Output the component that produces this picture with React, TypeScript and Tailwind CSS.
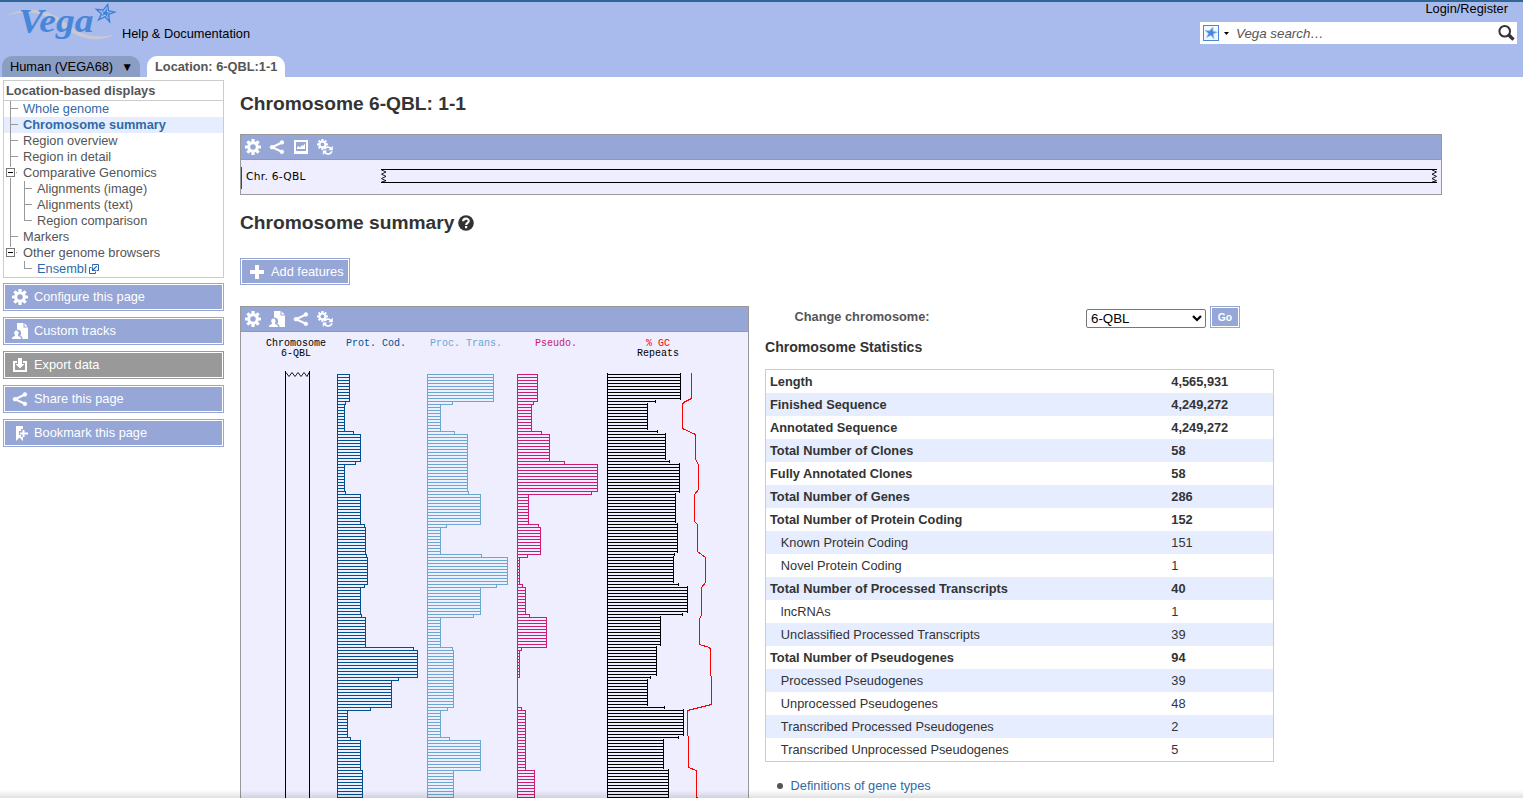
import React from 'react';

type Icon = () => React.ReactElement;

const GearShape = () => (
  <>
    <circle cx="8" cy="8" r="4.3" fill="none" stroke="currentColor" strokeWidth="3" />
    {[0, 45, 90, 135, 180, 225, 270, 315].map((a) => (
      <rect key={a} x="6.4" y="0" width="3.2" height="3.4" rx="0.5" fill="currentColor" transform={`rotate(${a} 8 8)`} />
    ))}
  </>
);

const Gear: Icon = () => (
  <svg className="size-4 shrink-0" viewBox="0 0 16 16"><GearShape /></svg>
);

const Share: Icon = () => (
  <svg className="size-4 shrink-0" viewBox="0 0 16 16" fill="currentColor" stroke="currentColor">
    <path d="M13 3.500 3 8.200 13 12.800" fill="none" strokeWidth="2.100" />
    <circle cx="12.900" cy="3.400" r="1.900" strokeWidth="0.600" />
    <circle cx="3" cy="8.200" r="1.900" strokeWidth="0.600" />
    <circle cx="12.900" cy="12.800" r="1.900" strokeWidth="0.600" />
  </svg>
);

const Picture: Icon = () => (
  <svg className="size-4 shrink-0" viewBox="0 0 16 16" fill="currentColor">
    <path fillRule="evenodd" d="M1 1h14v14H1zM3 3v9h10V3z" />
    <path d="M4 10V8.500L5.500 7 7 8.500 9 6l1 1 2-2.500V10z" />
  </svg>
);

const Reset: Icon = () => (
  <svg className="size-4 shrink-0" viewBox="0 0 16 16">
    <g transform="scale(0.68)"><GearShape /></g>
    <g fill="none" stroke="currentColor" strokeWidth="1.700">
      <path d="M7.400 10.200c1.400-2.600 5-2.700 6.600-.4" />
      <path d="M15 12.200c-1.200 3.300-5 3.600-7 1.200" />
    </g>
    <path d="M15.800 6.800v4.400h-4.400zM5.800 16v-4.400h4.400z" fill="currentColor" />
  </svg>
);

const Tracks: Icon = () => (
  <svg className="size-4 shrink-0" viewBox="0 0 16 16" fill="currentColor">
    <path d="M5 0h6.500v4.500H16V16h-5.500c0-2-.8-2.700-2.300-3.200.9-1 1-2.300.8-3.500C8.700 7.300 7 6.500 5 6.500z" />
    <path d="M12.500.3 15.700 3.500h-3.200z" />
    <path d="M0 16c0-2 .8-2.500 3-3v-1c-1.200-1-1.200-4.400 1.400-4.400S7 11 6 12v1c2.200.5 3 1 3 3z" />
  </svg>
);

const Export: Icon = () => (
  <svg className="size-4 shrink-0" viewBox="0 0 16 16" fill="currentColor">
    <path d="M1 4h4v2H3v7h10V6h-2V4h4v11H1z" />
    <path d="M6 1h4v6h2.500L8 11.500 3.500 7H6z" />
  </svg>
);

const Bookmark: Icon = () => (
  <svg className="size-4 shrink-0" viewBox="0 0 16 16" fill="currentColor">
    <path d="M4 1h7v3H9v2H7v4h2v2h2v4l-3.500-3.500L4 16z" />
    <path d="M10.500 5h2v2.500H16v2h-3.500V12h-2V9.500H8v-2h2.500z" />
  </svg>
);

const STAR = 'M12.500 0 13.200 6.800 20 8.500 13.500 11 14.500 19 9.500 13.500 2.500 17 5.500 10.500 0 5.500 7.500 6.200z';

const Logo = () => (
  <svg className="h-[44px] w-[122px] shrink-0 overflow-visible" viewBox="0 0 122 44">
    <path d="M8 15.500C20 7 44 7 59 18S86 41 115 34.500C94 45 76 37 60 25S30 9 8 15.500z" fill="#c5c9d3" />
    <text x="18.500" y="31.500" fontFamily="Liberation Serif, serif" fontWeight="700" fontStyle="italic" fontSize="34.500" fill="#4886d9" textLength="75" lengthAdjust="spacingAndGlyphs">Vega</text>
    <g transform="translate(96.500 4.500) scale(0.9)">
      <path d={STAR} fill="#a9c6f4" stroke="#3f80d6" strokeWidth="1.600" />
      <path d="M11.500 4v5L16 9l-4 1.500.5 4-3-3.500-4 2 2.500-3.500-3-2 4 .5z" fill="#3f80d6" />
    </g>
  </svg>
);

type Tree = 'mid' | 'box' | 'sub' | 'subEnd' | 'last' | 'lastEnd';

const TreeLine = ({ kind }: { kind: Tree }) => {
  const sub = kind === 'sub' || kind === 'subEnd' || kind === 'lastEnd';
  const d: Record<Tree, string> = {
    mid: 'M6 0h1v16H6zM7 7h7v1H7z',
    box: 'M6 0h1v2H6zM6 13h1v3H6zM12 7h1v1h-1z',
    last: 'M6 0h1v2H6zM12 7h1v1h-1z',
    sub: 'M6 0h1v16H6zM20 0h1v16h-1zM21 7h7v1h-7z',
    subEnd: 'M6 0h1v16H6zM20 0h1v8h-1zM21 7h7v1h-7z',
    lastEnd: 'M20 0h1v8h-1zM21 7h7v1h-7z',
  };
  return (
    <svg className={sub ? 'h-4 w-[33px] shrink-0' : 'h-4 w-[19px] shrink-0'} viewBox={sub ? '0 0 33 16' : '0 0 19 16'} shapeRendering="crispEdges">
      <path d={d[kind]} fill="#999" />
      {(kind === 'box' || kind === 'last') && (
        <>
          <path d="M2 3h9v9H2zM3 4v7h7V4z" fill="#777" fillRule="evenodd" />
          <path d="M4 7h5v1H4z" fill="#000" />
        </>
      )}
    </svg>
  );
};

const ExternalIcon = () => (
  <svg className="ml-0.5 size-[11px] shrink-0" viewBox="0 0 11 11" fill="none" stroke="#2a66ac">
    <path d="M3.500 2.500V.5h6v6H7.500M2.500 3.500H.5v6h6v-2" />
    <path d="M7.800 2.200 3.800 6.200M3.500 3.200v3.300h3.300" strokeWidth="1.200" />
  </svg>
);

const NAV: { label: string; tree: Tree; link?: boolean; active?: boolean }[] = [
  { label: 'Whole genome', tree: 'mid', link: true },
  { label: 'Chromosome summary', tree: 'mid', link: true, active: true },
  { label: 'Region overview', tree: 'mid' },
  { label: 'Region in detail', tree: 'mid' },
  { label: 'Comparative Genomics', tree: 'box' },
  { label: 'Alignments (image)', tree: 'sub' },
  { label: 'Alignments (text)', tree: 'sub' },
  { label: 'Region comparison', tree: 'subEnd' },
  { label: 'Markers', tree: 'mid' },
  { label: 'Other genome browsers', tree: 'last' },
  { label: 'Ensembl', tree: 'lastEnd', link: true },
];

const TOOLS: { label: string; icon: Icon; disabled?: boolean }[] = [
  { label: 'Configure this page', icon: Gear },
  { label: 'Custom tracks', icon: Tracks },
  { label: 'Export data', icon: Export, disabled: true },
  { label: 'Share this page', icon: Share },
  { label: 'Bookmark this page', icon: Bookmark },
];

const STATS: [string, string, boolean][] = [
  ['Length', '4,565,931', true],
  ['Finished Sequence', '4,249,272', true],
  ['Annotated Sequence', '4,249,272', true],
  ['Total Number of Clones', '58', true],
  ['Fully Annotated Clones', '58', true],
  ['Total Number of Genes', '286', true],
  ['Total Number of Protein Coding', '152', true],
  ['Known Protein Coding', '151', false],
  ['Novel Protein Coding', '1', false],
  ['Total Number of Processed Transcripts', '40', true],
  ['lncRNAs', '1', false],
  ['Unclassified Processed Transcripts', '39', false],
  ['Total Number of Pseudogenes', '94', true],
  ['Processed Pseudogenes', '39', false],
  ['Unprocessed Pseudogenes', '48', false],
  ['Transcribed Processed Pseudogenes', '2', false],
  ['Transcribed Unprocessed Pseudogenes', '5', false],
];

/* Runs of [bar width, number of 3px bins] */
type Runs = [number, number][];
const PROT: Runs = [[12, 9], [8, 1], [7, 9], [16, 1], [23, 9], [18, 1], [7, 9], [8, 1], [23, 10], [27, 1], [28, 9], [29, 1], [30, 9], [27, 1], [23, 9], [24, 1], [28, 10], [76, 1], [80, 9], [61, 1], [54, 9], [33, 1], [10, 9], [13, 1], [23, 10], [25, 10]];
const PROC: Runs = [[66, 9], [25, 1], [13, 9], [27, 1], [40, 19], [41, 1], [53, 10], [19, 1], [13, 9], [54, 1], [80, 9], [69, 1], [53, 9], [46, 1], [13, 10], [25, 1], [26, 19], [20, 1], [13, 9], [22, 1], [53, 10], [26, 10]];
const PSEUDO: Runs = [[20, 9], [16, 1], [14, 9], [24, 1], [32, 9], [47, 1], [80, 9], [74, 1], [11, 10], [21, 1], [23, 9], [10, 1], [2, 9], [5, 1], [8, 9], [12, 1], [29, 10], [4, 1], [2, 9], [0, 10], [4, 1], [8, 20], [17, 10]];
const REPEATS: Runs = [[73, 9], [48, 1], [40, 9], [50, 1], [58, 9], [62, 1], [72, 10], [68, 10], [70, 10], [67, 1], [66, 9], [71, 1], [80, 9], [75, 1], [53, 10], [49, 10], [43, 1], [40, 9], [57, 1], [76, 9], [71, 1], [56, 10], [61, 10]];
const GC = '691,372 691,398 683,402 682,404 682,428 695,434 695,459 698,464 698,489 694,494 694,521 697,524 697,551 705,557 705,582 701,587 701,615 699,618 699,644 709,647 710,649 710,675 711,676 711,704 687,710 687,735 688,736 688,767 696,770 696,797 698,798';

const TOP = 374;

function outlinePath(x0: number, runs: Runs): string {
  let d = '';
  let y = TOP;
  for (const [w, n] of runs) {
    for (let i = 0; i < n; i++) {
      d += `M${x0} ${y}h${w + 1}v1H${x0}zM${x0} ${y + 3}h${w + 1}v1H${x0}zM${x0 + w} ${y}h1v4h-1zM${x0} ${y}h1v4h-1z`;
      y += 3;
    }
  }
  return d;
}

function tickPath(x0: number, runs: Runs): string {
  let d = '';
  let y = TOP;
  for (const [w, n] of runs) {
    for (let i = 0; i < n; i++) {
      d += `M${x0} ${y}h${w}v1H${x0}zM${x0 + w} ${y - 1}h1v3h-1zM${x0} ${y - 1}h1v3h-1z`;
      y += 3;
    }
  }
  return d;
}

const ChromosomeChart = () => (
  <svg className="block h-[466px] w-[507px]" viewBox="241 332 507 466" shapeRendering="crispEdges">
    <g fontFamily="Liberation Mono, monospace" fontSize="10">
      <text x="266" y="346">Chromosome</text>
      <text x="281" y="356">6-QBL</text>
      <text x="346" y="346" fill="#005090">Prot. Cod.</text>
      <text x="430" y="346" fill="#6aa8cf">Proc. Trans.</text>
      <text x="535" y="346" fill="#cc1a75">Pseudo.</text>
      <text x="646" y="346" fill="#f00">% GC</text>
      <text x="637" y="356">Repeats</text>
    </g>
    <path d="M285 371h1v427h-1zM309 371h1v427h-1z" />
    <path d="M286 372.500l3 4 3-4 3 4 3-4 3 4 3-4 3 4 2-4" fill="none" stroke="#000" strokeWidth="0.900" shapeRendering="auto" />
    <path d={outlinePath(337, PROT)} fill="#005090" />
    <path d={outlinePath(427, PROC)} fill="#6aa8cf" />
    <path d={outlinePath(517, PSEUDO)} fill="#cc1a75" />
    <path d={tickPath(607, REPEATS)} />
    <polyline points={GC} fill="none" stroke="#f00" transform="translate(.5 .5)" />
  </svg>
);

const Toolbar = ({ icons }: { icons: Icon[] }) => (
  <div className="flex h-[25px] items-center gap-2 border-b border-[#999] bg-[#95a6d7] pl-1 text-white">
    {icons.map((I, i) => <I key={i} />)}
  </div>
);

export default function App() {
  return (
    <div className="relative h-[798px] w-[1523px] overflow-hidden bg-white font-['Liberation_Sans',Arial,sans-serif] text-[12.8px] leading-4 text-[#333]">
      <header className="flex h-[77px] flex-col justify-between border-t-2 border-[#2f6696] bg-[#a9baec] text-black">
        <div className="flex h-[46px] justify-between">
          <div className="-mt-0.5 flex">
            <Logo />
            <a className="mt-[26px]">Help &amp; Documentation</a>
          </div>
          <div className="mr-1.5 flex flex-col items-end">
            <a className="-mt-px mr-[9px]">Login/Register</a>
            <div className="mt-[5px] flex h-[22px] w-[317px] items-center bg-white pl-[3px] pr-[2px]">
              <svg className="size-4" viewBox="0 0 16 16">
                <rect x=".5" y=".5" width="15" height="15" fill="#f3f8ff" stroke="#4886d9" />
                <path d={STAR} transform="translate(2 2) scale(.62)" fill="#4886d9" stroke="#9fc3f2" strokeWidth="1.500" />
              </svg>
              <svg className="ml-[5px] h-[3px] w-[5px]" viewBox="0 0 5 3"><path d="M0 0h5L2.500 3z" /></svg>
              <span className="ml-[7px] flex-1 pt-px text-[13.330px] italic text-[#555]">Vega search…</span>
              <svg className="h-[18px] w-[17px]" viewBox="0 0 17 18" fill="none" stroke="#333">
                <circle cx="6.700" cy="7.200" r="5.300" strokeWidth="2" />
                <path d="M10.800 11l4.700 4.600" strokeWidth="3.400" />
              </svg>
            </div>
          </div>
        </div>
        <nav className="flex h-[21px] gap-[7px] pl-0.5">
          <div className="flex w-[138px] items-center rounded-t-[10px] bg-[#8b9dc3] pl-2">
            Human (VEGA68)<span className="ml-2 text-[12px]">▼</span>
          </div>
          <div className="flex w-[138px] items-center rounded-t-[10px] bg-white pl-2 font-bold text-[#555]">Location: 6-QBL:1-1</div>
        </nav>
      </header>

      <div className="flex">
        <aside className="ml-[3px] mt-[3px] w-[221px]">
          <div className="h-[198px] border border-[#ccc]">
            <h2 className="h-5 border-b border-[#ccc] pl-0.5 pt-0.5 font-bold text-[#555]">Location-based displays</h2>
            <ul>
              {NAV.map((n) => (
                <li key={n.label} className={`flex h-4 items-center ${n.active ? 'bg-[#e6edff] font-bold' : ''} ${n.link ? 'text-[#2f6aa8]' : 'text-[#555]'}`}>
                  <TreeLine kind={n.tree} />
                  {n.label}
                  {n.label === 'Ensembl' && <ExternalIcon />}
                </li>
              ))}
            </ul>
          </div>
          <div className="mt-[5px] flex flex-col gap-1.5">
            {TOOLS.map(({ label, icon: I, disabled }) => (
              <a key={label} className={`block h-7 border bg-white p-px text-white ${disabled ? 'border-[#999]' : 'border-[#95a6d7]'}`}>
                <span className={`flex h-6 items-center gap-1.5 pl-[7px] ${disabled ? 'bg-[#999]' : 'bg-[#95a6d7]'}`}>
                  <I />
                  {label}
                </span>
              </a>
            ))}
          </div>
        </aside>

        <main className="ml-4 flex-1">
          <h1 className="mt-4 text-[19.200px] font-bold leading-[22px]">Chromosome 6-QBL: 1-1</h1>
          <section className="mt-[19px] h-[61px] w-[1202px] border border-[#999] bg-[#eeeeff]">
            <Toolbar icons={[Gear, Share, Picture, Reset]} />
            <svg className="block h-[34px] w-[1200px]" viewBox="241 160 1200 34" shapeRendering="crispEdges">
              <path d="M241 167h1v22h-1z" fill="#e00" />
              <text x="246" y="180" fontFamily="DejaVu Sans, sans-serif" fontSize="10.670" textLength="59.500">Chr. 6-QBL</text>
              <path d="M381 169h1056v1H381zM381 182h1056v1H381z" />
              <path d="M381.500 185v3" stroke="#fff" />
              <path d="M381.500 170l4.500 2-4.500 2.200 4.500 2.200-4.500 2.200 4.500 2.200-4.500 1.200M1432 170l4.500 2-4.500 2.200 4.500 2.200-4.500 2.200 4.500 2.200-4.500 1.200" fill="none" stroke="#000" strokeWidth="0.900" shapeRendering="auto" />
            </svg>
          </section>
          <h2 className="mt-[17px] flex items-center text-[19.200px] font-bold leading-[22px]">
            Chromosome summary
            <svg className="ml-1 size-4" viewBox="0 0 16 16">
              <circle cx="8" cy="8" r="7.800" fill="#333" />
              <path d="M5.200 6.200C5.200 2.800 10.900 2.900 10.800 6c0 1.800-2.700 1.900-2.700 3.900" fill="none" stroke="#fff" strokeWidth="2.100" />
              <rect x="7" y="11" width="2.200" height="2.200" fill="#fff" />
            </svg>
          </h2>
          <a className="mt-6 block h-[27px] w-[110px] border border-[#95a6d7] p-px text-white">
            <span className="flex h-[23px] items-center bg-[#95a6d7] pl-2">
              <svg className="size-[14px]" viewBox="0 0 14 14"><path d="M5 0h4v5h5v4H9v5H5V9H0V5h5z" fill="#fff" /></svg>
              <span className="ml-[7px]">Add features</span>
            </span>
          </a>

          <div className="mt-[21px] flex">
            <section className="h-[500px] w-[509px] shrink-0 border border-[#999] bg-[#eeeeff]">
              <Toolbar icons={[Gear, Tracks, Share, Reset]} />
              <ChromosomeChart />
            </section>
            <section className="ml-4 w-[509px]">
              <div className="flex h-[22px] items-center">
                <label className="w-[321px] pl-[29.500px] font-bold text-[#555]">Change chromosome:</label>
                <div className="mt-[3px] flex h-[19px] w-[120px] items-center justify-between rounded-[2px] border border-[#767676] bg-white pl-1 pr-[3px] text-[13.330px] text-black">
                  6-QBL
                  <svg className="h-[7px] w-[10px]" viewBox="0 0 10 7" fill="none" stroke="#000" strokeWidth="2.200"><path d="M1 1l4 4 4-4" /></svg>
                </div>
                <button className="ml-1 h-[22px] w-[30px] border border-[#95a6d7] p-px text-[10.300px] font-bold text-white">
                  <span className="block h-[18px] bg-[#95a6d7] pt-px leading-[18px]">Go</span>
                </button>
              </div>
              <h3 className="mt-[10px] text-[14.080px] font-bold leading-[18px]">Chromosome Statistics</h3>
              <div className="mt-[13px] border border-[#ccc]">
                {STATS.map(([label, value, bold], i) => (
                  <div key={label} className={`flex h-[23px] items-center ${i % 2 ? 'bg-[#e6edff]' : 'bg-white'} ${bold ? 'font-bold' : ''}`}>
                    <span className={bold ? 'w-[405.300px] pl-1' : 'w-[405.300px] pl-[14.800px]'}>{label}</span>
                    <span>{value}</span>
                  </div>
                ))}
              </div>
              <div className="mt-4 flex items-center pl-3">
                <span className="size-1.5 rounded-full bg-[#555]" />
                <a className="ml-[7.600px] text-[#2f6aa8]">Definitions of gene types</a>
              </div>
            </section>
          </div>
        </main>
      </div>
      <div className="absolute inset-x-0 bottom-0 h-2 bg-gradient-to-b from-transparent to-black/12" />
    </div>
  );
}
